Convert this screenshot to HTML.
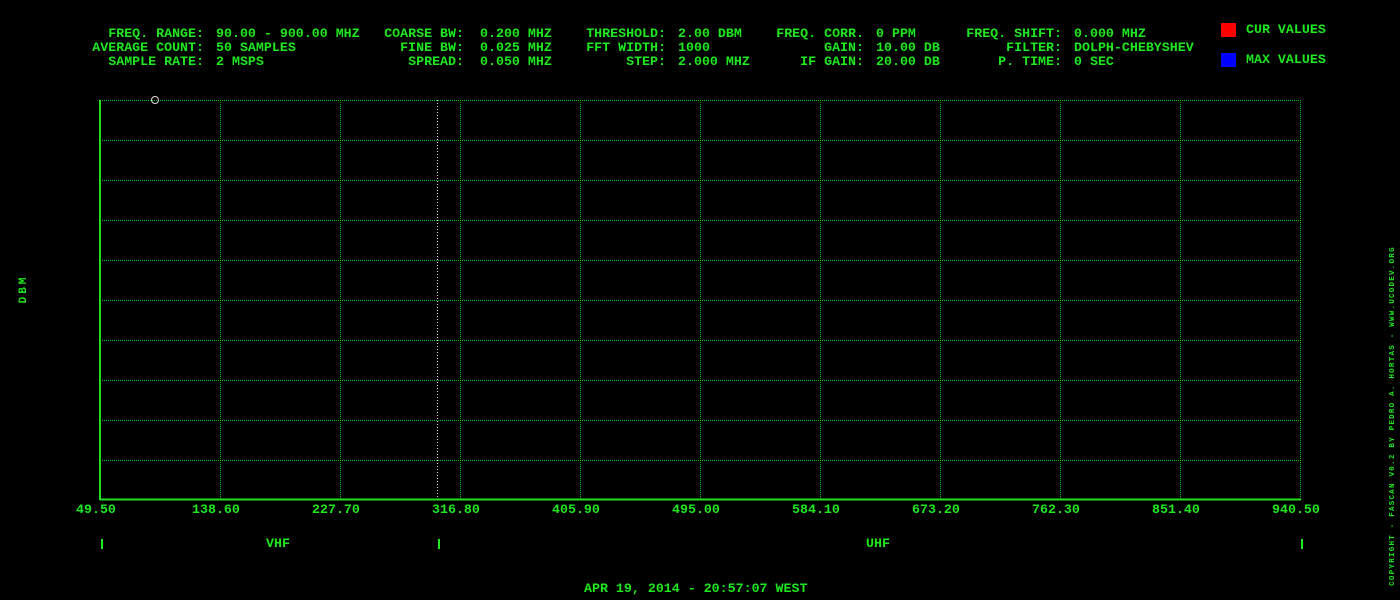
<!DOCTYPE html>
<html><head><meta charset="utf-8"><style>
html,body{margin:0;padding:0;background:#000;width:1400px;height:600px;overflow:hidden}
.t{position:absolute;font-family:"Liberation Mono",monospace;font-weight:bold;font-size:13.3px;color:#1ee81e;line-height:14px;white-space:pre;letter-spacing:0}
.r{text-align:right}
</style></head><body>
<svg width="1400" height="600" style="position:absolute;left:0;top:0">
<g stroke="#10c010" stroke-width="1" stroke-dasharray="1,1" shape-rendering="crispEdges">
<line x1="100" y1="100.5" x2="1300" y2="100.5"/>
<line x1="100" y1="140.5" x2="1300" y2="140.5"/>
<line x1="100" y1="180.5" x2="1300" y2="180.5"/>
<line x1="100" y1="220.5" x2="1300" y2="220.5"/>
<line x1="100" y1="260.5" x2="1300" y2="260.5"/>
<line x1="100" y1="300.5" x2="1300" y2="300.5"/>
<line x1="100" y1="340.5" x2="1300" y2="340.5"/>
<line x1="100" y1="380.5" x2="1300" y2="380.5"/>
<line x1="100" y1="420.5" x2="1300" y2="420.5"/>
<line x1="100" y1="460.5" x2="1300" y2="460.5"/>
<line x1="220.5" y1="100" x2="220.5" y2="500"/>
<line x1="340.5" y1="100" x2="340.5" y2="500"/>
<line x1="460.5" y1="100" x2="460.5" y2="500"/>
<line x1="580.5" y1="100" x2="580.5" y2="500"/>
<line x1="700.5" y1="100" x2="700.5" y2="500"/>
<line x1="820.5" y1="100" x2="820.5" y2="500"/>
<line x1="940.5" y1="100" x2="940.5" y2="500"/>
<line x1="1060.5" y1="100" x2="1060.5" y2="500"/>
<line x1="1180.5" y1="100" x2="1180.5" y2="500"/>
<line x1="1300.5" y1="100" x2="1300.5" y2="500"/>
</g>
<line x1="437.5" y1="100" x2="437.5" y2="500" stroke="#ddd" stroke-dasharray="1,2" shape-rendering="crispEdges"/>
<line x1="100" y1="100" x2="100" y2="500" stroke="#20e020" stroke-width="2" shape-rendering="crispEdges"/>
<line x1="100" y1="499.5" x2="1301" y2="499.5" stroke="#20e020" stroke-width="2" shape-rendering="crispEdges"/>
<circle cx="155" cy="100" r="3.5" fill="none" stroke="#ddd" stroke-width="1"/>
<rect x="1221" y="23" width="15" height="14" fill="#ff0000"/>
<rect x="1221" y="53" width="15" height="14" fill="#0000ff"/>
<g fill="#1ee81e"><rect x="101" y="539" width="2" height="10"/><rect x="438" y="539" width="2" height="10"/><rect x="1301" y="539" width="2" height="10"/></g>
</svg>

<div class="t r" style="right:1196px;top:27px">FREQ. RANGE:</div>
<div class="t r" style="right:1196px;top:41px">AVERAGE COUNT:</div>
<div class="t r" style="right:1196px;top:55px">SAMPLE RATE:</div>
<div class="t" style="left:216px;top:27px">90.00 - 900.00 MHZ</div>
<div class="t" style="left:216px;top:41px">50 SAMPLES</div>
<div class="t" style="left:216px;top:55px">2 MSPS</div>

<div class="t r" style="right:936px;top:27px">COARSE BW:</div>
<div class="t r" style="right:936px;top:41px">FINE BW:</div>
<div class="t r" style="right:936px;top:55px">SPREAD:</div>
<div class="t" style="left:480px;top:27px">0.200 MHZ</div>
<div class="t" style="left:480px;top:41px">0.025 MHZ</div>
<div class="t" style="left:480px;top:55px">0.050 MHZ</div>

<div class="t r" style="right:734px;top:27px">THRESHOLD:</div>
<div class="t r" style="right:734px;top:41px">FFT WIDTH:</div>
<div class="t r" style="right:734px;top:55px">STEP:</div>
<div class="t" style="left:678px;top:27px">2.00 DBM</div>
<div class="t" style="left:678px;top:41px">1000</div>
<div class="t" style="left:678px;top:55px">2.000 MHZ</div>

<div class="t r" style="right:536px;top:27px">FREQ. CORR.</div>
<div class="t r" style="right:536px;top:41px">GAIN:</div>
<div class="t r" style="right:536px;top:55px">IF GAIN:</div>
<div class="t" style="left:876px;top:27px">0 PPM</div>
<div class="t" style="left:876px;top:41px">10.00 DB</div>
<div class="t" style="left:876px;top:55px">20.00 DB</div>

<div class="t r" style="right:338px;top:27px">FREQ. SHIFT:</div>
<div class="t r" style="right:338px;top:41px">FILTER:</div>
<div class="t r" style="right:338px;top:55px">P. TIME:</div>
<div class="t" style="left:1074px;top:27px">0.000 MHZ</div>
<div class="t" style="left:1074px;top:41px">DOLPH-CHEBYSHEV</div>
<div class="t" style="left:1074px;top:55px">0 SEC</div>

<div class="t" style="left:1246px;top:23px">CUR VALUES</div>
<div class="t" style="left:1246px;top:53px">MAX VALUES</div>

<div class="t" style="left:76px;top:503px">49.50</div>
<div class="t" style="left:192px;top:503px">138.60</div>
<div class="t" style="left:312px;top:503px">227.70</div>
<div class="t" style="left:432px;top:503px">316.80</div>
<div class="t" style="left:552px;top:503px">405.90</div>
<div class="t" style="left:672px;top:503px">495.00</div>
<div class="t" style="left:792px;top:503px">584.10</div>
<div class="t" style="left:912px;top:503px">673.20</div>
<div class="t" style="left:1032px;top:503px">762.30</div>
<div class="t" style="left:1152px;top:503px">851.40</div>
<div class="t" style="left:1272px;top:503px">940.50</div>

<div class="t" style="left:266px;top:537px">VHF</div>
<div class="t" style="left:866px;top:537px">UHF</div>
<div class="t" style="left:584px;top:582px">APR 19, 2014 - 20:57:07 WEST</div>

<div class="t" style="left:24px;top:289px;transform:translate(-50%,-50%) rotate(-90deg);font-size:11px;letter-spacing:3px">DBM</div>
<div class="t" style="left:1393px;top:416px;transform:translate(-50%,-50%) rotate(-90deg);font-size:7.6px;line-height:8px;letter-spacing:1.2px">COPYRIGHT - FASCAN V0.2 BY PEDRO A. HORTAS - WWW.UCODEV.ORG</div>
</body></html>
